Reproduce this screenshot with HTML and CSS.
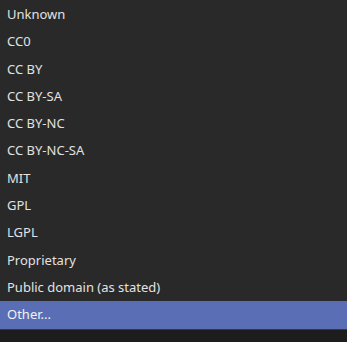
FILE: index.html
```html
<!DOCTYPE html>
<html lang="en">
<head>
    <meta charset="UTF-8">
    <meta name="viewport" content="width=device-width, initial-scale=1.0">
    <title>License</title>
    <link rel="stylesheet" href="styles.css">
</head>
<body>
    <div class="dropdown">
        <ul class="options">
            <li>Unknown</li>
            <li>CC0</li>
            <li>CC BY</li>
            <li>CC BY-SA</li>
            <li>CC BY-NC</li>
            <li>CC BY-NC-SA</li>
            <li>MIT</li>
            <li>GPL</li>
            <li>LGPL</li>
            <li>Proprietary</li>
            <li>Public domain (as stated)</li>
            <li class="selected">Other...</li>
        </ul>
        <div class="footer"></div>
    </div>
</body>
</html>
```

FILE: styles.css
```css
html, body {
    margin: 0;
    padding: 0;
    background-color: #1d1d1d;
}
.dropdown {
    width: 347px;
    height: 342px;
    font-family: "Noto Sans", "Open Sans", sans-serif;
    font-size: 13px;
    color: #e2e2e2;
    display: flex;
    flex-direction: column;
}
.options {
    list-style: none;
    margin: 0;
    padding: 1px 0 0 0;
    background-color: #292929;
}
.options li {
    height: 27.3px;
    line-height: 27px;
    padding-left: 7px;
}
.options li.selected {
    background-color: #5a6eb6;
    color: #f2f2f2;
}
.footer {
    flex: 1;
    border-top: 1px solid #2e3558;
    background-color: #1d1d1d;
}
```
